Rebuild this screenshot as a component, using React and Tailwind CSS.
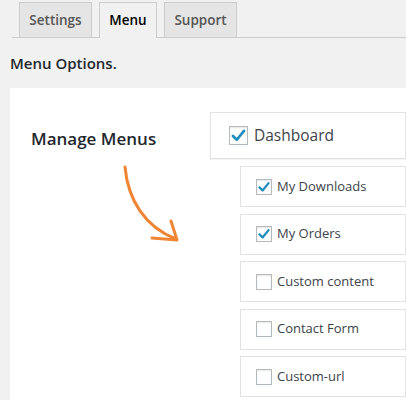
import React from "react";

const font = { fontFamily: '"Open Sans", "Noto Sans", sans-serif' };

const Check = ({ checked, big }) => (
  <span
    className={`flex items-center justify-center bg-white border border-[#b4b9be] shadow-[inset_0_1px_2px_rgba(0,0,0,0.1)] ${
      big ? "w-[19px] h-[19px]" : "w-[16px] h-[16px]"
    }`}
  >
    {checked && (
      <svg viewBox="0 0 20 20" className={big ? "w-[17px] h-[17px]" : "w-[14px] h-[14px]"}>
        <path
          d="M3.5 10.5 L8 15 L16.5 4.5"
          fill="none"
          stroke="#1e8cbe"
          strokeWidth="3.2"
          strokeLinecap="round"
          strokeLinejoin="round"
        />
      </svg>
    )}
  </span>
);

const items = [
  { label: "My Downloads", checked: true },
  { label: "My Orders", checked: true },
  { label: "Custom content", checked: false },
  { label: "Contact Form", checked: false },
  { label: "Custom-url", checked: false },
];

export default function App() {
  return (
    <div className="w-[406px] h-[400px] overflow-hidden bg-[#f1f1f1]" style={font}>
      {/* Tabs */}
      <div className="ml-[12px] pt-[2px] flex items-end gap-[7px] pl-[7px] border-b border-[#ccc] h-[38px]">
        <div className="h-[35px] w-[73px] flex items-center justify-center border border-b-0 border-[#ccc] bg-[#e5e5e5] text-[13.5px] font-semibold text-[#555]">
          Settings
        </div>
        <div className="h-[36px] -mb-px w-[58px] flex items-center justify-center border border-b-0 border-[#ccc] bg-[#f1f1f1] text-[13.5px] font-semibold text-black">
          Menu
        </div>
        <div className="h-[35px] w-[73px] flex items-center justify-center border border-b-0 border-[#ccc] bg-[#e5e5e5] text-[13.5px] font-semibold text-[#555]">
          Support
        </div>
      </div>

      <h2 className="ml-[10px] mt-[15px] text-[15px] font-semibold text-[#23282d] leading-[20px]">
        Menu Options.
      </h2>

      {/* Panel */}
      <div className="ml-[10px] mt-[15px] bg-white h-[400px] flex pt-[24px]">
        <div className="w-[200px] shrink-0">
          <div className="ml-[21px] mt-[16px] text-[17px] font-semibold text-[#23282d] leading-[22px]">
            Manage Menus
          </div>
          <svg width="80" height="90" viewBox="0 0 80 90" className="ml-[100px] mt-[15px]">
            <g fill="none" stroke="#ef8535" strokeWidth="3" strokeLinecap="round" strokeLinejoin="round">
              <path d="M15 2 C18 35 35 62 66 74" />
              <path d="M42 73 L67 75 L61 56" />
            </g>
          </svg>
        </div>
        <div className="flex-1 flex flex-col">
          <div className="h-[47px] flex items-center gap-[6px] pl-[18px] border border-[#e2e2e2] shadow-[0_1px_1px_rgba(0,0,0,0.04)]">
            <Check checked big />
            <span className="text-[15.5px] text-[#3c434a]">Dashboard</span>
          </div>
          <div className="ml-[30px] mt-[7px] flex flex-col gap-[6.5px]">
            {items.map((it) => (
              <div
                key={it.label}
                className="h-[41px] flex items-center gap-[5px] pl-[15px] border border-[#e2e2e2]"
              >
                <Check checked={it.checked} />
                <span className="text-[13px] text-[#3c434a]">{it.label}</span>
              </div>
            ))}
          </div>
        </div>
      </div>
    </div>
  );
}
